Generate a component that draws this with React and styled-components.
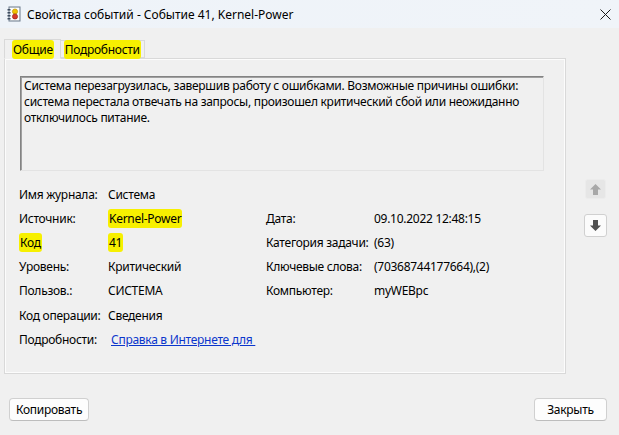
import React from 'react';
import styled, { createGlobalStyle } from 'styled-components';

const GlobalStyle = createGlobalStyle`
  html, body {
    margin: 0;
    padding: 0;
    background: #f0f0f0;
  }
  body {
    font-family: "Noto Sans", "Open Sans", sans-serif;
    font-size: 12px;
    letter-spacing: -0.28px;
    color: #000;
  }
`;

const Window = styled.div`
  width: 619px;
  height: 435px;
  display: flex;
  flex-direction: column;
  background: #f0f0f0;
  overflow: hidden;
`;

const TitleBar = styled.div`
  height: 28px;
  flex: none;
  display: flex;
  align-items: center;
  padding-left: 7px;
  background: linear-gradient(90deg, #eef3f9, #f0f4f9);
  font-size: 12px;
  letter-spacing: 0;
`;

const TitleText = styled.span`
  margin-left: 6px;
  flex: 1;
`;

const CloseBox = styled.div`
  width: 28px;
  height: 28px;
  display: flex;
  align-items: center;
  justify-content: center;
`;

const Body = styled.div`
  display: flex;
  padding: 11px 0 0 4px;
`;

const TabArea = styled.div`
  width: 562px;
  display: flex;
  flex-direction: column;
`;

const TabStrip = styled.div`
  display: flex;
  align-items: flex-end;
  height: 19px;
  position: relative;
  z-index: 1;
`;

const Tab = styled.div`
  height: ${(p) => (p.$active ? '20px' : '18px')};
  padding: ${(p) => (p.$active ? '0 6px 0 7px' : '0 3px 0 3px')};
  margin-bottom: ${(p) => (p.$active ? '-1px' : '0')};
  display: flex;
  align-items: center;
  box-sizing: border-box;
  border: 1px solid #d9d9d9;
  border-bottom: ${(p) => (p.$active ? '1px solid #f0f0f0' : '1px solid #d9d9d9')};
  border-left: ${(p) => (p.$active ? '1px solid #d9d9d9' : 'none')};
  background: #f0f0f0;
`;

const Mark = styled.span`
  background: #f7f000;
  border-radius: 3px;
  padding: 1px 1px;
`;

const Panel = styled.div`
  height: 316px;
  box-sizing: border-box;
  border: 1px solid #d9d9d9;
  box-shadow: inset 1px 1px 0 #fcfcfc, inset -1px -1px 0 #fcfcfc;
  padding: 17px 0 0 14px;
  display: flex;
  flex-direction: column;
`;

const Description = styled.div`
  width: 524px;
  height: 95px;
  box-sizing: border-box;
  border-top: 1px solid #838383;
  border-left: 1px solid #838383;
  border-right: 1px solid #e3e3e3;
  border-bottom: 1px solid #e3e3e3;
  box-shadow: inset 1px 1px 0 #a0a0a0;
  padding: 1px 3px;
  line-height: 16px;
  margin-left: 1px;
`;

const Fields = styled.div`
  display: grid;
  grid-template-columns: 89px 158px 108px 1fr;
  grid-auto-rows: 24.2px;
  align-items: center;
  margin-top: 11px;
`;

const Cell = styled.div`
  white-space: nowrap;
`;

const Link = styled.a`
  color: #0b36cc;
  text-decoration: underline;
  margin-left: 3px;
  white-space: pre;
`;

const Side = styled.div`
  display: flex;
  flex-direction: column;
  align-items: center;
  padding: 140px 0 0 18px;
  gap: 15px;
`;

const ArrowButton = styled.div`
  width: ${(p) => (p.$disabled ? '21px' : '23px')};
  height: ${(p) => (p.$disabled ? '20px' : '23px')};
  box-sizing: border-box;
  display: flex;
  align-items: center;
  justify-content: center;
  background: ${(p) => (p.$disabled ? '#e6e6e6' : '#fbfbfb')};
  border: ${(p) => (p.$disabled ? '1px solid #ececec' : '1px solid #d0d0d0')};
  border-radius: 3px;
`;

const Footer = styled.div`
  margin-top: auto;
  display: flex;
  justify-content: space-between;
  padding: 0 12px 14px 9px;
`;

const Button = styled.div`
  height: 23px;
  min-width: ${(p) => p.$w}px;
  box-sizing: border-box;
  display: flex;
  align-items: center;
  justify-content: center;
  background: #fdfdfd;
  border: 1px solid #d0d0d0;
  border-bottom-color: #bdbdbd;
  border-radius: 4px;
  padding: 0 6px;
`;

const rows = [
  ['Имя журнала:', 'Система', '', ''],
  ['Источник:', <Mark key="s">Kernel-Power</Mark>, 'Дата:', '09.10.2022 12:48:15'],
  [<Mark key="k">Код</Mark>, <Mark key="n">41</Mark>, 'Категория задачи:', '(63)'],
  ['Уровень:', 'Критический', 'Ключевые слова:', '(70368744177664),(2)'],
  ['Пользов.:', 'СИСТЕМА', 'Компьютер:', 'myWEBpc'],
  ['Код операции:', 'Сведения', '', ''],
];

function JournalIcon() {
  return (
    <svg width="14" height="16" viewBox="0 0 14 16">
      <rect x="2" y="1" width="11" height="14" fill="#f4f4f4" stroke="#6a7a8c" />
      <rect x="3" y="2" width="9" height="12" fill="#fff" />
      {[3, 6, 9, 12].map((y) => (
        <rect key={y} x="0.5" y={y} width="3" height="1.5" fill="#3b4a5e" />
      ))}
      <circle cx="8" cy="5.5" r="2.6" fill="#f2c200" stroke="#b08a00" strokeWidth="0.6" />
      <circle cx="8" cy="10.5" r="2.6" fill="#d63a2c" stroke="#8e1d14" strokeWidth="0.6" />
    </svg>
  );
}

function Arrow({ up, color }) {
  return (
    <svg width="13" height="13" viewBox="0 0 13 13">
      {up ? (
        <path d="M6.5 1 L12 6.5 H9 V12 H4 V6.5 H1 Z" fill={color} />
      ) : (
        <path d="M6.5 12 L12 6.5 H9 V1 H4 V6.5 H1 Z" fill={color} />
      )}
    </svg>
  );
}

export default function App() {
  return (
    <>
      <GlobalStyle />
      <Window>
        <TitleBar>
          <JournalIcon />
          <TitleText>Свойства событий - Событие 41, Kernel-Power</TitleText>
          <CloseBox>
            <svg width="11" height="11" viewBox="0 0 11 11">
              <path d="M0.5 0.5 L10.5 10.5 M10.5 0.5 L0.5 10.5" stroke="#1a1a1a" strokeWidth="1" />
            </svg>
          </CloseBox>
        </TitleBar>
        <Body>
          <TabArea>
            <TabStrip>
              <Tab $active><Mark>Общие</Mark></Tab>
              <Tab><Mark>Подробности</Mark></Tab>
            </TabStrip>
            <Panel>
              <Description>
                Система перезагрузилась, завершив работу с ошибками. Возможные причины ошибки:
                система перестала отвечать на запросы, произошел критический сбой или неожиданно
                отключилось питание.
              </Description>
              <Fields>
                {rows.map((r, i) => r.map((c, j) => <Cell key={`${i}-${j}`}>{c}</Cell>))}
                <Cell>Подробности:</Cell>
                <Cell>
                  <Link href="#">Справка в Интернете для </Link>
                </Cell>
              </Fields>
            </Panel>
          </TabArea>
          <Side>
            <ArrowButton $disabled>
              <Arrow up color="#a8a8a8" />
            </ArrowButton>
            <ArrowButton>
              <Arrow color="#505050" />
            </ArrowButton>
          </Side>
        </Body>
        <Footer>
          <Button $w={79}>Копировать</Button>
          <Button $w={73}>Закрыть</Button>
        </Footer>
      </Window>
    </>
  );
}
